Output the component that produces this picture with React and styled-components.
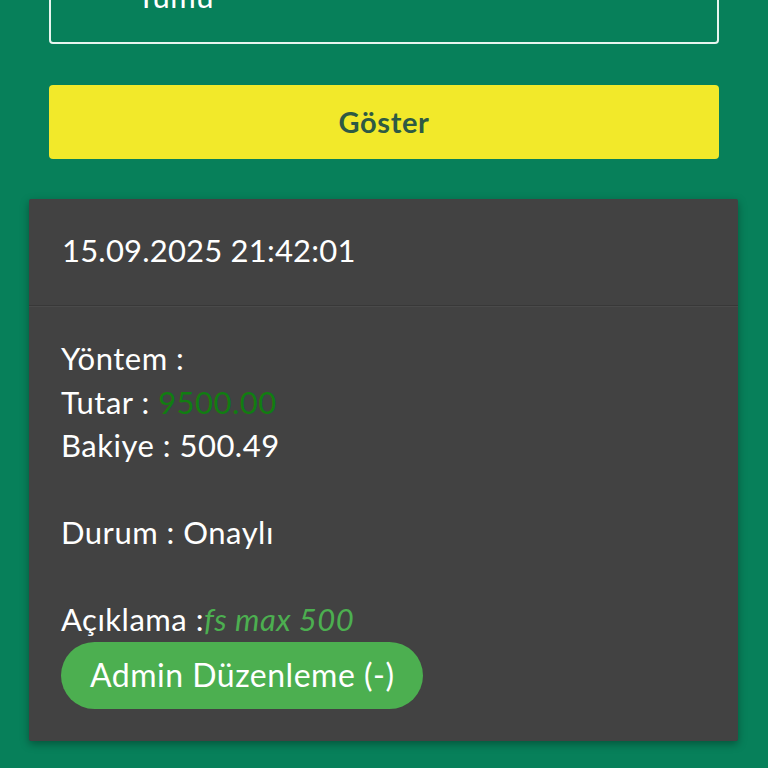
import React from "react";
import styled, { createGlobalStyle } from "styled-components";

const Global = createGlobalStyle`
  html, body { margin: 0; padding: 0; background: #07805a; }
  body { font-family: Lato, "Noto Sans", sans-serif; overflow: hidden; }
`;

const Page = styled.div`
  width: 768px;
  height: 768px;
  background: #07805a;
  overflow: hidden;
  display: flex;
  flex-direction: column;
`;

const Form = styled.div`
  display: flex;
  flex-direction: column;
  padding: 0 49px 0 49px;
  margin-top: -40px;
  gap: 41px;
`;

const SelectBox = styled.div`
  height: 84px;
  border: 2px solid #e8f5ef;
  border-radius: 4px;
  box-sizing: border-box;
  color: #ffffff;
  font-size: 31px;
  letter-spacing: 0.5px;
  line-height: 40px;
  padding: 14px 0 0 86px;
`;

const ShowButton = styled.button`
  height: 74px;
  border: none;
  border-radius: 4px;
  background: #f2e92a;
  color: #2e5a44;
  font-family: Lato, "Noto Sans", sans-serif;
  font-weight: 700;
  font-size: 29px;
  letter-spacing: 0.6px;
  padding: 0 0 2px;
  cursor: pointer;
`;

const Card = styled.div`
  margin: 40px 30px 0 29px;
  background: #424242;
  border-radius: 2px;
  box-shadow: 0 3px 8px rgba(0, 0, 0, 0.35);
  color: #ffffff;
  display: flex;
  flex-direction: column;
`;

const CardHeader = styled.div`
  height: 107px;
  box-sizing: border-box;
  padding: 29px 32px 0 33px;
  font-size: 31px;
  letter-spacing: 0.2px;
  line-height: 44px;
  border-bottom: 1px solid #383838;
  box-shadow: 0 1px 0 #4a4a4a;
`;

const CardBody = styled.div`
  padding: 31px 32px 32px 32px;
  display: flex;
  flex-direction: column;
  align-items: flex-start;
  font-size: 31px;
  letter-spacing: 0.5px;
  line-height: 43.5px;
`;

const Line = styled.div`
  min-height: 43.5px;
`;

const Value = styled.span`
  color: ${(p) => p.$color};
  font-style: ${(p) => (p.$italic ? "italic" : "normal")};
`;

const AdminButton = styled.button`
  margin-top: 0;
  height: 67px;
  padding: 0 29px 2px;
  border: none;
  border-radius: 34px;
  background: #4caf50;
  color: #ffffff;
  font-family: Lato, "Noto Sans", sans-serif;
  font-size: 32px;
  letter-spacing: 0.5px;
  cursor: pointer;
`;

export default function App() {
  return (
    <Page>
      <Global />
      <Form>
        <SelectBox>Tümü</SelectBox>
        <ShowButton>Göster</ShowButton>
      </Form>
      <Card>
        <CardHeader>15.09.2025 21:42:01</CardHeader>
        <CardBody>
          <Line>Yöntem :</Line>
          <Line>
            Tutar : <Value $color="#117d11">9500.00</Value>
          </Line>
          <Line>Bakiye : 500.49</Line>
          <Line />
          <Line>Durum : Onaylı</Line>
          <Line />
          <Line>
            Açıklama :<Value $color="#4caf50" $italic>fs max 500</Value>
          </Line>
          <AdminButton>Admin Düzenleme (-)</AdminButton>
        </CardBody>
      </Card>
    </Page>
  );
}
